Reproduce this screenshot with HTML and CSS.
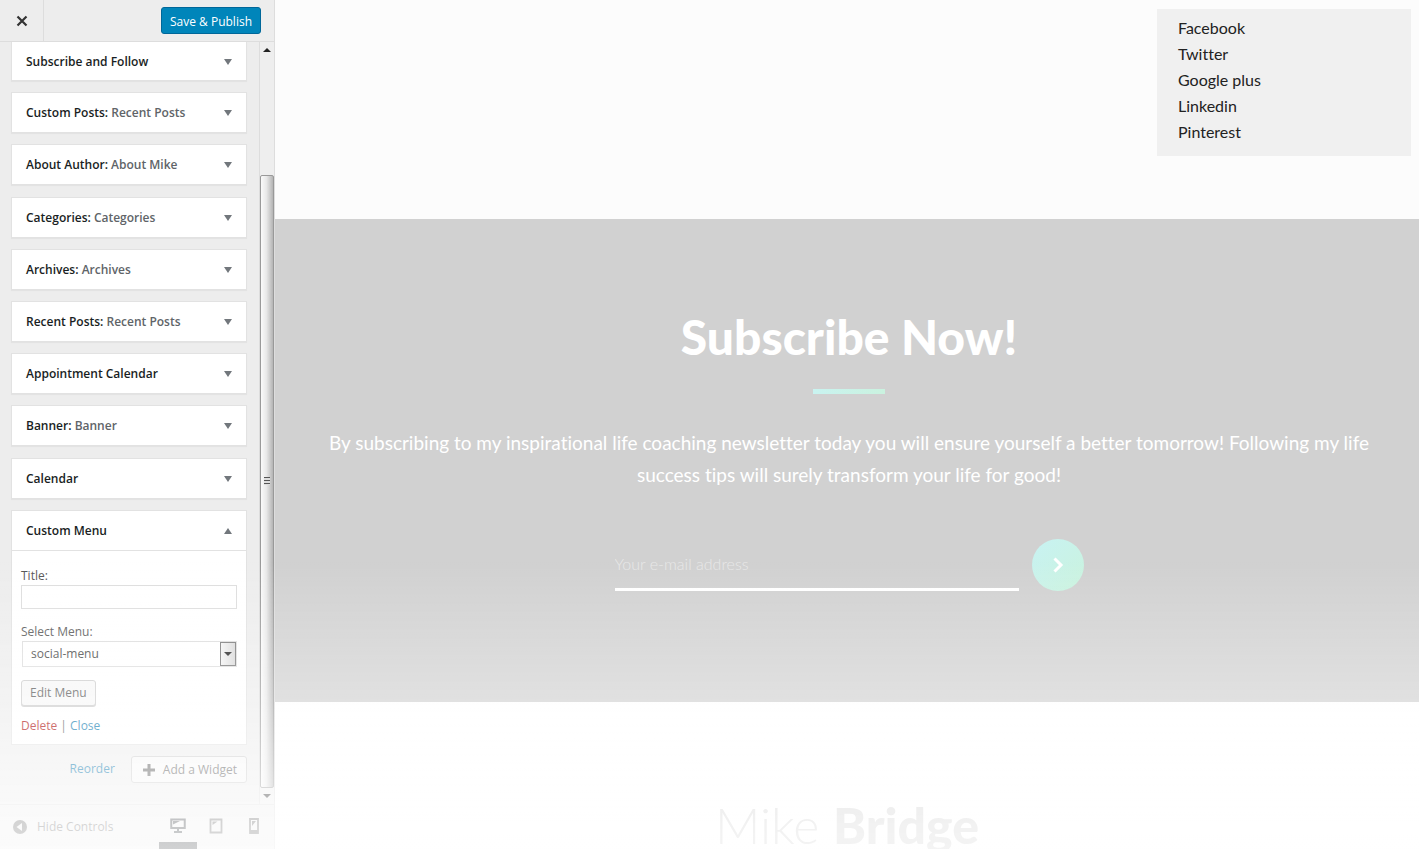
FILE: index.html
```html
<!DOCTYPE html>
<html lang="en">
<head>
<meta charset="utf-8">
<title>Customize widgets</title>
<link rel="stylesheet" href="styles.css">
</head>
<body>
<div class="app">
  <aside class="sidebar">
    <header class="topbar">
      <button class="close" type="button" aria-label="Close customizer"><svg width="12" height="12" viewBox="0 0 12 12"><path d="M1.5 1.5l9 9M10.5 1.5l-9 9" stroke="#333" stroke-width="2.2" fill="none"/></svg></button>
      <button class="publish" type="button">Save &amp; Publish</button>
    </header>
    <div class="panel">
      <div class="widgets">
        <button class="card first" type="button"><span class="name">Subscribe and Follow</span><i class="caret"></i></button>
        <button class="card" type="button"><span class="name">Custom Posts: <span class="sub">Recent Posts</span></span><i class="caret"></i></button>
        <button class="card" type="button"><span class="name">About Author: <span class="sub">About Mike</span></span><i class="caret"></i></button>
        <button class="card" type="button"><span class="name">Categories: <span class="sub">Categories</span></span><i class="caret"></i></button>
        <button class="card" type="button"><span class="name">Archives: <span class="sub">Archives</span></span><i class="caret"></i></button>
        <button class="card" type="button"><span class="name">Recent Posts: <span class="sub">Recent Posts</span></span><i class="caret"></i></button>
        <button class="card" type="button"><span class="name">Appointment Calendar</span><i class="caret"></i></button>
        <button class="card" type="button"><span class="name">Banner: <span class="sub">Banner</span></span><i class="caret"></i></button>
        <button class="card" type="button"><span class="name">Calendar</span><i class="caret"></i></button>
        <section class="open">
          <button class="card head" type="button"><span class="name">Custom Menu</span><i class="caret up"></i></button>
          <form class="fields">
            <label for="title">Title:</label>
            <input class="text" id="title" type="text">
            <label class="second" for="menu">Select Menu:</label>
            <div class="select">
              <select id="menu"><option>social-menu</option></select>
              <span class="drop"><i class="tiny"></i></span>
            </div>
            <button class="edit" type="button">Edit Menu</button>
            <p class="links"><a class="delete" href="#">Delete</a> | <a href="#">Close</a></p>
          </form>
        </section>
        <div class="actions">
          <a href="#">Reorder</a>
          <button class="add" type="button"><svg width="12" height="12" viewBox="0 0 12 12"><path d="M6 0v12M0 6h12" stroke="#555" stroke-width="3"/></svg>Add a Widget</button>
        </div>
      </div>
      <div class="scrollbar">
        <span class="arrow"><i class="tiny up"></i></span>
        <span class="track"></span>
        <span class="thumb"><i class="grip"></i></span>
        <span class="arrow end"><i class="tiny"></i></span>
      </div>
    </div>
    <footer class="bottombar">
      <button class="hide" type="button"><svg width="16" height="16" viewBox="0 0 16 16"><circle cx="8" cy="8" r="7" fill="#555"/><path d="M10 4v8L4.500 8z" fill="#eee"/></svg>Hide Controls</button>
      <div class="devices">
        <button class="device active" type="button" aria-label="Desktop"><svg width="16" height="16" viewBox="0 0 16 16"><path d="M1.250 1.500h13.500v8.500H1.250zM8 10v3M4 14h8" fill="none" stroke="#191e23" stroke-width="2"/><path d="M3 3h7L3 6.500z" fill="#191e23"/></svg></button>
        <button class="device" type="button" aria-label="Tablet"><svg width="14" height="16" viewBox="0 0 14 16"><path d="M1.500 1.500h11v13h-11z" fill="none" stroke="#555" stroke-width="1.800"/><path d="M3.500 3.500h5L3.500 7z" fill="#555"/></svg></button>
        <button class="device" type="button" aria-label="Phone"><svg width="10" height="16" viewBox="0 0 10 16"><path d="M1 1h8v14H1z" fill="none" stroke="#555" stroke-width="1.800"/><path d="M3 3h4L3 8zM1 12h8v3H1z" fill="#555"/></svg></button>
      </div>
    </footer>
  </aside>
  <main class="preview">
    <section class="upper">
      <ul class="social">
        <li><a href="#">Facebook</a></li>
        <li><a href="#">Twitter</a></li>
        <li><a href="#">Google plus</a></li>
        <li><a href="#">Linkedin</a></li>
        <li><a href="#">Pinterest</a></li>
      </ul>
    </section>
    <section class="subscribe">
      <h2>Subscribe Now!</h2>
      <span class="rule"></span>
      <p>By subscribing to my inspirational life coaching newsletter today you will ensure yourself a better tomorrow! Following my life success tips will surely transform your life for good!</p>
      <form class="signup">
        <input type="email" placeholder="Your e-mail address" aria-label="Your e-mail address">
        <button type="button" aria-label="Subscribe"><svg width="12" height="16" viewBox="0 0 12 16"><path d="M2.500 1.500L9 8l-6.500 6.500" fill="none" stroke="#fff" stroke-width="3"/></svg></button>
      </form>
    </section>
    <section class="brand"><h1>Mike <b>Bridge</b></h1></section>
  </main>
</div>
</body>
</html>
```
FILE: styles.css
```css
* { box-sizing: border-box; }
body { margin: 0; background: #fff; }
button, input, select { font: inherit; color: inherit; margin: 0; }
button { cursor: pointer; padding: 0; border: 0; background: none; }
svg { display: block; }

.app { display: grid; grid-template: minmax(0, 1fr) / 275px minmax(0, 1fr); height: 100vh; overflow: hidden; }
.app::after {
  content: "";
  position: fixed;
  inset: 66vh 0 0 0;
  pointer-events: none;
  background: linear-gradient(rgba(255,255,255,0), rgba(255,255,255,.35) 49%, rgba(255,255,255,.74) 89%, rgba(255,255,255,.8));
}

.sidebar {
  display: flex;
  flex-direction: column;
  min-height: 0;
  background: #ededed;
  border-right: 1px solid #ddd;
  font: 12px/18px "Open Sans", "Noto Sans", sans-serif;
  color: #555;
}
.sidebar a { color: #0073aa; text-decoration: none; }

.topbar { display: flex; justify-content: space-between; align-items: center; flex: none; height: 42px; border-bottom: 1px solid #ddd; padding-right: 13px; }
.close { display: grid; place-items: center; width: 44px; height: 41px; border-right: 1px solid #ddd; }
.publish { height: 27px; padding: 2px 8px 0; border: 1px solid #006799; border-radius: 3px; background: #0085ba; color: #fff; }

.panel { display: flex; flex: 1; min-height: 0; }
.widgets { display: flex; flex-direction: column; justify-content: space-between; flex: 1; padding: 0 12px 21px 11px; }
.card {
  display: flex;
  justify-content: space-between;
  align-items: center;
  flex: none;
  width: 100%;
  height: 41px;
  padding: 1px 14px 0;
  border: 1px solid #e2e2e2;
  background: #fff;
  box-shadow: 0 1px 1px rgba(0,0,0,.04);
  text-align: left;
}
.first { height: 39px; border-top: 0; }
.name { font-weight: 600; color: #191e23; }
.sub { color: #606468; }
.caret { border: 4px solid transparent; border-top: 6px solid #72777c; border-bottom: 0; }
.caret.up { border-top: 0; border-bottom: 6px solid #72777c; }

.open { border: 1px solid #e2e2e2; background: #fff; }
.head { height: 40px; border-width: 0 0 1px; box-shadow: none; }
.fields { display: flex; flex-direction: column; padding: 16px 9px 9px; }
.text { height: 24px; border: 1px solid #ddd; background: #fff; }
.second { margin-top: 14px; }
.select { display: flex; height: 26px; border: 1px solid #ddd; margin-left: 1px; }
.select select { flex: 1; appearance: none; border: 0; background: #fff; padding: 0 8px; color: #444; }
.drop { display: grid; place-items: center; width: 16px; border: 1px solid #777; background: linear-gradient(90deg, #f4f4f4, #d8d8d8); }
.tiny { border: 4px solid transparent; border-top-color: #222; border-bottom: 0; }
.tiny.up { border: 4px solid transparent; border-bottom-color: #222; border-top: 0; }
.edit { align-self: flex-start; height: 26px; margin-top: 13px; padding: 1px 8px 0; border: 1px solid #ccc; border-radius: 3px; background: #f7f7f7; box-shadow: 0 1px 0 #ccc; }
.links { margin: 11px 0 0; }
.sidebar .delete { color: #a00; }
.actions { display: flex; justify-content: flex-end; align-items: center; gap: 16px; }
.add { display: flex; align-items: center; gap: 8px; height: 27px; padding: 1px 9px 0 11px; border: 1px solid #ccc; border-radius: 3px; background: #f7f7f7; }

.scrollbar { display: flex; flex-direction: column; width: 15px; border-left: 1px solid #ddd; background: #eee; }
.arrow { display: grid; place-items: center; height: 16px; }
.track { flex: 117; }
.thumb { display: grid; place-items: center; flex: 612; width: 14px; border: 1px solid #999; border-radius: 2px; background: linear-gradient(90deg, #fafafa, #e8e8e8 45%, #b4b4b4); }
.grip { width: 6px; height: 8px; background: repeating-linear-gradient(#555 0 1px, #ddd 1px 3px); }

.bottombar { display: flex; justify-content: space-between; flex: none; height: 45px; border-top: 1px solid #ddd; padding: 0 1px 0 12px; }
.hide { display: flex; align-items: center; gap: 9px; }
.devices { display: flex; }
.device { display: grid; place-items: center; width: 38px; border-bottom: 7px solid transparent; padding-top: 5px; }
.device.active { border-bottom-color: #191e23; }

.preview { display: flex; flex-direction: column; min-width: 0; font-family: Lato, sans-serif; font-variant-ligatures: none; }
.upper { display: flex; justify-content: flex-end; align-items: flex-start; padding: 9px 8px 63px; background: #fcfcfc; }
.social { list-style: none; width: 254px; margin: 0; padding: 6px 21px 11px; background: #f0f0f0; font-size: 16px; line-height: 26px; }
.social a { color: #222; text-decoration: none; }
.subscribe { display: flex; flex-direction: column; align-items: center; padding: 90px 34px 111px 38px; background: #d1d1d1; color: #fff; text-align: center; }
.subscribe h2 { margin: 0; font-size: 48px; line-height: 56px; font-weight: 900; }
.rule { width: 72px; height: 5px; margin-top: 24px; background: linear-gradient(90deg, #c9f3f0, #caf2df); }
.subscribe p { margin: 33px 0 0; font-size: 19px; line-height: 32px; }
.signup { display: flex; align-items: center; gap: 13px; margin-top: 48px; }
.signup input { width: 404px; height: 52px; padding: 0; border: 0; border-bottom: 3px solid #fff; background: none; font-size: 16px; outline: 0; }
.signup input::placeholder { color: #e8e8e8; opacity: 1; font-weight: 300; }
.signup button { display: grid; place-items: center; width: 52px; height: 52px; border-radius: 50%; background: linear-gradient(135deg, #c8f2f3, #caf3dd); }
.brand { flex: 1; padding: 100px 0 0; background: #fff; text-align: center; }
.brand h1 { margin: 0; font-size: 50px; line-height: 47px; font-weight: 300; color: #c8c8c8; }
.brand b { font-weight: 900; }
```
